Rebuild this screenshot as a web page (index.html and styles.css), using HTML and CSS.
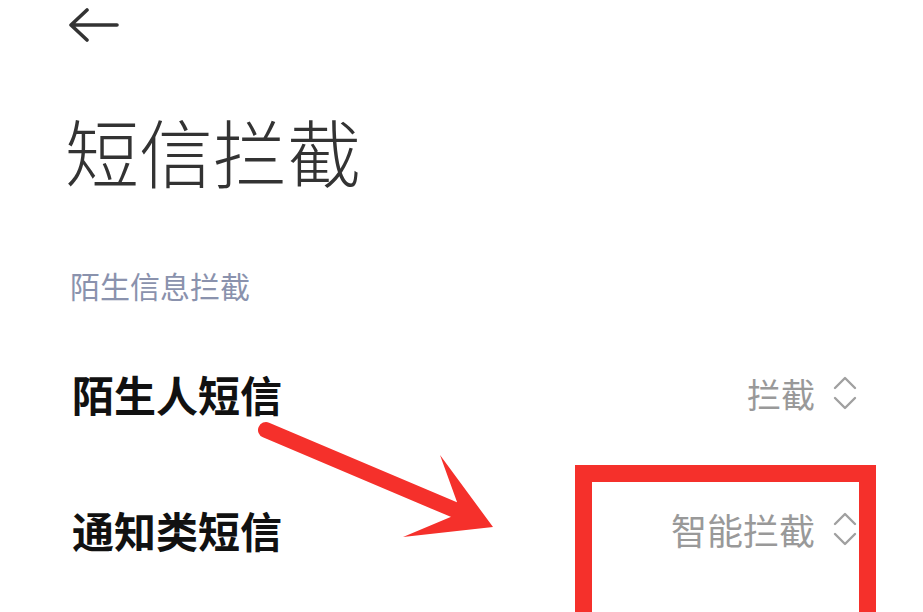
FILE: index.html
```html
<!DOCTYPE html>
<html lang="zh-CN">
<head>
<meta charset="utf-8">
<link rel="stylesheet" href="styles.css">
</head>
<body>
<div class="page">
  <div class="topbar">
    <svg class="back" width="52" height="36" viewBox="0 0 52 36">
      <path d="M49 17 H4 M19 2 L3 17 L19 32" fill="none" stroke="#333" stroke-width="3.6" stroke-linecap="round" stroke-linejoin="round"/>
    </svg>
  </div>
  <h1 class="title">短信拦截</h1>
  <div class="section">陌生信息拦截</div>
  <div class="row">
    <span class="label">陌生人短信</span>
    <span class="value">拦截<svg class="updown" width="24" height="34" viewBox="0 0 24 34"><path d="M2 12 L12 2 L22 12 M2 22 L12 32 L22 22" fill="none" stroke="#a0a0a0" stroke-width="2.4" stroke-linecap="round" stroke-linejoin="round"/></svg></span>
  </div>
  <div class="row">
    <span class="label">通知类短信</span>
    <span class="value wide">智能拦截<svg class="updown" width="24" height="34" viewBox="0 0 24 34"><path d="M2 12 L12 2 L22 12 M2 22 L12 32 L22 22" fill="none" stroke="#a0a0a0" stroke-width="2.4" stroke-linecap="round" stroke-linejoin="round"/></svg></span>
  </div>
</div>
<svg class="annot-arrow" width="923" height="612" viewBox="0 0 923 612">
  <line x1="266" y1="430" x2="455" y2="510" stroke="#f5302b" stroke-width="16" stroke-linecap="round"/>
  <polygon points="440,455 493,527 403,537 453,516 457,502" fill="#f5302b"/>
</svg>
<div class="redbox"></div>
</body>
</html>
```
FILE: styles.css
```css
html, body {
  margin: 0;
  padding: 0;
  background: #ffffff;
}
body {
  width: 923px;
  height: 612px;
  overflow: hidden;
  position: relative;
  font-family: "Noto Sans CJK SC", "Noto Sans", sans-serif;
}
.page {
  padding: 0 68px 0 68px;
  height: 612px;
  overflow: hidden;
  box-sizing: border-box;
}
.topbar {
  height: 60px;
  display: flex;
  align-items: flex-start;
  padding-top: 8px;
  box-sizing: border-box;
}
.back {
  display: block;
}
.title {
  margin: 40px 0 0 -3px;
  font-size: 74px;
  font-weight: 300;
  line-height: 100px;
  color: #333333;
}
.section {
  margin-top: 65px;
  font-size: 30px;
  line-height: 40px;
  color: #8a92ad;
  padding-left: 2px;
}
.row {
  display: flex;
  justify-content: space-between;
  align-items: center;
  height: 136px;
}
.section + .row {
  margin-top: 20px;
}
.label {
  font-size: 42px;
  font-weight: 700;
  color: #111111;
  padding-left: 4px;
}
.value {
  display: flex;
  align-items: center;
  font-size: 34px;
  color: #999999;
}
.value.wide {
  font-size: 36px;
}
.updown {
  margin-left: 18px;
  margin-right: -2px;
}
.annot-arrow {
  position: absolute;
  left: 0;
  top: 0;
  pointer-events: none;
}
.redbox {
  position: absolute;
  left: 575px;
  top: 465px;
  width: 301px;
  height: 147px;
  box-sizing: border-box;
  border: 17px solid #f5302b;
  border-bottom: none;
}
```
